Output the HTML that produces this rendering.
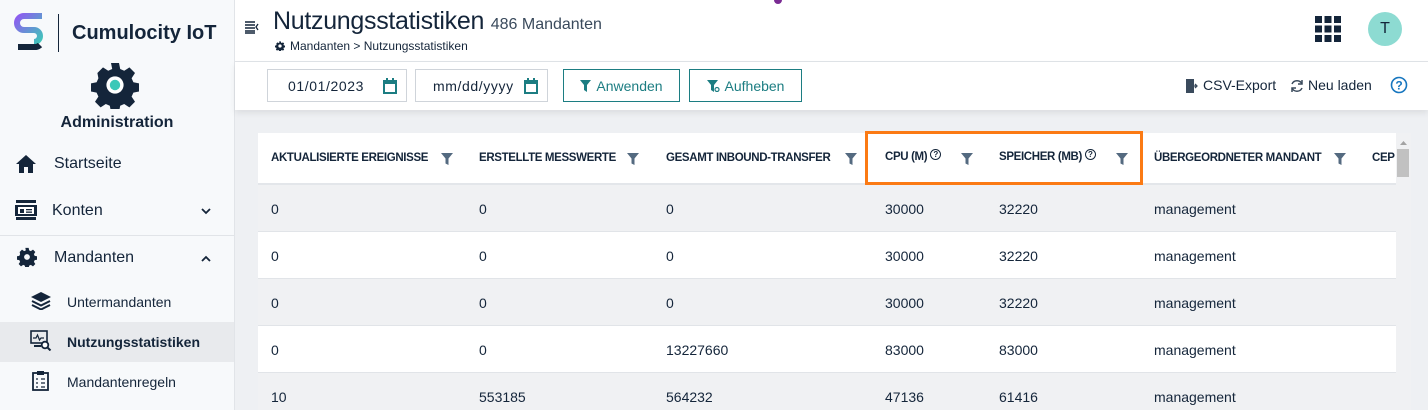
<!DOCTYPE html>
<html><head><meta charset="utf-8"><style>
*{box-sizing:border-box;margin:0;padding:0}
body{width:1428px;height:410px;overflow:hidden;font-family:"Liberation Sans",sans-serif;color:#14253a;background:#eef0f3;position:relative}
.sb{position:absolute;left:0;top:0;width:235px;height:410px;background:#f7f9fb;border-right:1px solid #e1e4e8}
.abs{position:absolute}
.nav{position:absolute;left:0;width:234px;font-size:16px;color:#14253a}
.top{position:absolute;left:235px;top:0;right:0;height:62px;background:#fff;border-bottom:1px solid #e1e4e8}
.tb{position:absolute;left:235px;top:62px;right:0;height:48px;background:#fff;box-shadow:0 3px 6px rgba(0,0,0,.08)}
.inp{position:absolute;top:7px;height:33px;border:1px solid #cfd4da;font-size:14px;background:#fff;letter-spacing:.6px}
.btn{position:absolute;top:7px;height:33px;border:1px solid #1c7d82;color:#1c7d82;font-size:14px;display:flex;align-items:center;justify-content:center;gap:5px}
.card{position:absolute;left:258px;top:133px;width:1138px;height:277px;background:#fff;overflow:hidden}
.hd{position:absolute;top:0;left:0;right:0;height:52px;border-bottom:2px solid #e3e6ea;font-size:11.5px;font-weight:bold;color:#14253a;letter-spacing:-.35px}
.hd span{position:absolute;top:19px;white-space:nowrap}
.q{display:inline-block;width:11px;height:11px;border:1.2px solid #14253a;border-radius:50%;font-size:8px;text-align:center;line-height:9px;vertical-align:3px;margin-left:3px;letter-spacing:0}
.row{position:absolute;left:0;right:0;height:47px;border-bottom:1px solid #e1e4e8;font-size:14px}
.row span{position:absolute;top:16px}
.g{background:#f0f1f3}
</style></head><body>
<div class="sb">
 <svg class="abs" style="left:14px;top:13px" width="32" height="40" viewBox="0 0 32 40"><defs><linearGradient id="lg" x1="0" y1="0" x2="1" y2="1"><stop offset="0" stop-color="#8e5cf0"/><stop offset="1" stop-color="#3cc8b8"/></linearGradient></defs><path d="M28 3H10a7 7 0 0 0 0 14h10a6 6 0 0 1 0 12" fill="none" stroke="url(#lg)" stroke-width="6"/><path d="M4 34h18a7 7 0 0 0 4-2" fill="none" stroke="#14253a" stroke-width="6"/></svg>
 <div class="abs" style="left:58px;top:14px;width:1px;height:38px;background:#14253a"></div>
 <div class="abs" style="left:72px;top:22px;font-size:20px;font-weight:bold">Cumulocity IoT</div>
 <svg class="abs" style="left:91px;top:61px" width="48" height="48" viewBox="0 0 24 24"><path fill="#14253a" d="M10 1h4l.6 3 2 .9 2.6-1.7 2.8 2.8-1.7 2.6.9 2 3 .6v4l-3 .6-.9 2 1.7 2.6-2.8 2.8-2.6-1.7-2 .9-.6 3h-4l-.6-3-2-.9-2.6 1.7-2.8-2.8 1.7-2.6-.9-2-3-.6v-4l3-.6.9-2L3.2 6 6 3.2l2.6 1.7 2-.9z"/><circle cx="12" cy="12" r="4.3" fill="#fff"/><circle cx="12" cy="12" r="2.6" fill="#3cc8b8"/></svg>
 <div class="abs" style="left:0;width:234px;top:114px;text-align:center;font-size:16px;font-weight:bold">Administration</div>
 <svg class="abs" style="left:16px;top:155px" width="20" height="18" viewBox="0 0 20 18"><path fill="#14253a" d="M10 0 0 9h3v9h5v-6h4v6h5V9h3z"/></svg>
 <div class="nav" style="top:155px;left:54px">Startseite</div>
 <svg class="abs" style="left:15px;top:200px" width="22" height="20" viewBox="0 0 22 20"><rect x="1" y="0" width="20" height="3" fill="#14253a"/><rect x="0" y="5" width="22" height="11" fill="#14253a"/><rect x="3" y="7" width="16" height="7" fill="#fff"/><rect x="5" y="9" width="4" height="4" fill="#14253a"/><rect x="11" y="9" width="6" height="1.3" fill="#14253a"/><rect x="11" y="11.5" width="6" height="1.3" fill="#14253a"/><rect x="1" y="17" width="20" height="3" fill="#14253a"/></svg>
 <div class="nav" style="top:202px;left:52px">Konten</div>
 <svg class="abs" style="left:201px;top:208px" width="10" height="7" viewBox="0 0 10 7"><path d="M1 1l4 4 4-4" fill="none" stroke="#14253a" stroke-width="1.8"/></svg>
 <div class="abs" style="left:0;top:235px;width:234px;height:1px;background:#e1e4e8"></div>
 <svg class="abs" style="left:17px;top:247px" width="20" height="20" viewBox="0 0 24 24"><path fill="#14253a" d="M10 1h4l.6 3 2 .9 2.6-1.7 2.8 2.8-1.7 2.6.9 2 3 .6v4l-3 .6-.9 2 1.7 2.6-2.8 2.8-2.6-1.7-2 .9-.6 3h-4l-.6-3-2-.9-2.6 1.7-2.8-2.8 1.7-2.6-.9-2-3-.6v-4l3-.6.9-2L3.2 6 6 3.2l2.6 1.7 2-.9z"/><circle cx="12" cy="12" r="3.5" fill="#f7f9fb"/></svg>
 <div class="nav" style="top:249px;left:54px">Mandanten</div>
 <svg class="abs" style="left:201px;top:255px" width="10" height="7" viewBox="0 0 10 7"><path d="M1 6l4-4 4 4" fill="none" stroke="#14253a" stroke-width="1.8"/></svg>
 <svg class="abs" style="left:31px;top:292px" width="20" height="18" viewBox="0 0 20 18"><path fill="#14253a" d="M10 0 20 5 10 10 0 5z"/><path fill="none" stroke="#14253a" stroke-width="2" d="M1 9l9 4.5L19 9M1 13l9 4.5 9-4.5"/></svg>
 <div class="nav" style="top:294px;left:67px;font-size:14px">Untermandanten</div>
 <div class="abs" style="left:0;top:322px;width:234px;height:40px;background:#e8eaed"></div>
 <svg class="abs" style="left:30px;top:330px" width="22" height="21" viewBox="0 0 22 21"><rect x="1" y="1" width="16" height="12" fill="none" stroke="#14253a" stroke-width="1.6"/><path d="M3 8h3l1.5-3 2 5 1.5-2h3" fill="none" stroke="#14253a" stroke-width="1.2"/><circle cx="15" cy="15" r="3.3" fill="#fff" stroke="#14253a" stroke-width="1.8"/><path d="M17.5 17.5l3 3" stroke="#14253a" stroke-width="2"/><rect x="4" y="15" width="7" height="2" fill="#14253a"/></svg>
 <div class="nav" style="top:334px;left:67px;font-size:14px;font-weight:bold">Nutzungsstatistiken</div>
 <svg class="abs" style="left:32px;top:370px" width="17" height="21" viewBox="0 0 17 21"><rect x="1" y="3" width="15" height="17" fill="none" stroke="#14253a" stroke-width="1.8"/><rect x="5" y="1" width="7" height="4" fill="#14253a"/><path d="M4 9h2M9 9h4M4 13h2M9 13h4M4 17h2M9 17h4" stroke="#14253a" stroke-width="1.2"/></svg>
 <div class="nav" style="top:374px;left:67px;font-size:14px">Mandantenregeln</div>
</div>
<div class="top">
 <svg class="abs" style="left:10px;top:21px" width="14" height="13" viewBox="0 0 14 13"><path d="M0 1h10M0 4h10M0 7h10M0 10h10M0 12h10" stroke="#14253a" stroke-width="1.4"/><path d="M13 3l-2 3 2 3" fill="none" stroke="#14253a" stroke-width="1.3"/></svg>
 <div class="abs" style="left:38px;top:7px;font-size:25px;color:#14253a;letter-spacing:-.3px">Nutzungsstatistiken <span style="font-size:16px;color:#3a4a5c;letter-spacing:0">486 Mandanten</span></div>
 <svg class="abs" style="left:40px;top:41px" width="10" height="10" viewBox="0 0 24 24"><path fill="#14253a" d="M10 1h4l.6 3 2 .9 2.6-1.7 2.8 2.8-1.7 2.6.9 2 3 .6v4l-3 .6-.9 2 1.7 2.6-2.8 2.8-2.6-1.7-2 .9-.6 3h-4l-.6-3-2-.9-2.6 1.7-2.8-2.8 1.7-2.6-.9-2-3-.6v-4l3-.6.9-2L3.2 6 6 3.2l2.6 1.7 2-.9z"/><circle cx="12" cy="12" r="4" fill="#fff"/></svg>
 <div class="abs" style="left:55px;top:39px;font-size:12px">Mandanten &gt; Nutzungsstatistiken</div>
 <svg class="abs" style="left:1080px;top:16px" width="26" height="26" viewBox="0 0 26 26"><g fill="#14253a"><rect x="0" y="0" width="7" height="7"/><rect x="9.5" y="0" width="7" height="7"/><rect x="19" y="0" width="7" height="7"/><rect x="0" y="9.5" width="7" height="7"/><rect x="9.5" y="9.5" width="7" height="7"/><rect x="19" y="9.5" width="7" height="7"/><rect x="0" y="19" width="7" height="7"/><rect x="9.5" y="19" width="7" height="7"/><rect x="19" y="19" width="7" height="7"/></g></svg>
 <div class="abs" style="left:1133px;top:12px;width:34px;height:34px;border-radius:50%;background:#8ddbd2;font-size:16px;text-align:center;line-height:34px">T</div>
</div>
<div class="tb">
 <div class="inp" style="left:32px;width:140px"><span class="abs" style="left:20px;top:8px">01/01/2023</span><svg class="abs" style="right:9px;top:8px" width="14" height="16" viewBox="0 0 14 16"><rect x="1" y="3" width="12" height="12" fill="none" stroke="#1c7d82" stroke-width="2"/><rect x="1" y="3" width="12" height="3" fill="#1c7d82"/><path d="M4 0v4M10 0v4" stroke="#1c7d82" stroke-width="2"/></svg></div>
 <div class="inp" style="left:180px;width:133px"><span class="abs" style="left:17px;top:8px">mm/dd/yyyy</span><svg class="abs" style="right:9px;top:8px" width="14" height="16" viewBox="0 0 14 16"><rect x="1" y="3" width="12" height="12" fill="none" stroke="#1c7d82" stroke-width="2"/><rect x="1" y="3" width="12" height="3" fill="#1c7d82"/><path d="M4 0v4M10 0v4" stroke="#1c7d82" stroke-width="2"/></svg></div>
 <div class="btn" style="left:328px;width:117px"><svg width="11" height="12" viewBox="0 0 11 12"><path fill="#1c7d82" d="M0 0h11L7 5v7L4 10V5z"/></svg>Anwenden</div>
 <div class="btn" style="left:454px;width:113px"><svg width="13" height="12" viewBox="0 0 13 12"><path fill="#1c7d82" d="M0 0h11L7 5v7L4 10V5z"/><circle cx="10" cy="9.5" r="2" fill="#fff" stroke="#1c7d82" stroke-width="1.2"/></svg>Aufheben</div>
 <svg class="abs" style="left:951px;top:17px" width="12" height="14" viewBox="0 0 12 14"><rect x="0" y="0" width="8" height="14" fill="#3a4a5c"/><path d="M6 7h5M9 5l2 2-2 2" stroke="#3a4a5c" stroke-width="1.3" fill="none"/></svg>
 <div class="abs" style="left:968px;top:15px;font-size:14px">CSV-Export</div>
 <svg class="abs" style="left:1055px;top:17px" width="14" height="14" viewBox="0 0 14 14"><path d="M12 5A5.5 5.5 0 0 0 2 5M2 9a5.5 5.5 0 0 0 10 0" fill="none" stroke="#3a4a5c" stroke-width="1.5"/><path d="M12 1v4H8M2 13V9h4" fill="none" stroke="#3a4a5c" stroke-width="1.5"/></svg>
 <div class="abs" style="left:1073px;top:15px;font-size:14px">Neu laden</div>
 <svg class="abs" style="left:1155px;top:14px" width="18" height="18" viewBox="0 0 18 18"><circle cx="9" cy="9" r="7.5" fill="none" stroke="#1776bf" stroke-width="1.6"/><text x="9" y="13.5" font-size="12" font-weight="bold" text-anchor="middle" fill="#1776bf" font-family="Liberation Sans">?</text></svg>
</div>
<div class="card">
 <div class="hd">
  <span style="left:13px">AKTUALISIERTE EREIGNISSE</span>
  <span style="left:221px">ERSTELLTE MESSWERTE</span>
  <span style="left:408px">GESAMT INBOUND-TRANSFER</span>
  <span style="left:627px;top:16px">CPU (M)<span class="q" style="position:static">?</span></span>
  <span style="left:741px;top:16px">SPEICHER (MB)<span class="q" style="position:static">?</span></span>
  <span style="left:896px">ÜBERGEORDNETER MANDANT</span>
  <span style="left:1114px">CEP</span>
 </div>
 <div class="row g" style="top:52px"><span style="left:13px">0</span><span style="left:221px">0</span><span style="left:408px">0</span><span style="left:627px">30000</span><span style="left:741px">32220</span><span style="left:896px">management</span></div>
 <div class="row" style="top:99px"><span style="left:13px">0</span><span style="left:221px">0</span><span style="left:408px">0</span><span style="left:627px">30000</span><span style="left:741px">32220</span><span style="left:896px">management</span></div>
 <div class="row g" style="top:146px"><span style="left:13px">0</span><span style="left:221px">0</span><span style="left:408px">0</span><span style="left:627px">30000</span><span style="left:741px">32220</span><span style="left:896px">management</span></div>
 <div class="row" style="top:193px"><span style="left:13px">0</span><span style="left:221px">0</span><span style="left:408px">13227660</span><span style="left:627px">83000</span><span style="left:741px">83000</span><span style="left:896px">management</span></div>
 <div class="row g" style="top:240px"><span style="left:13px">10</span><span style="left:221px">553185</span><span style="left:408px">564232</span><span style="left:627px">47136</span><span style="left:741px">61416</span><span style="left:896px">management</span></div>
</div>
<svg class="abs" style="left:0;top:0" width="1428" height="410">
 <g fill="#546a80">
  <path d="M441 153h12l-4.5 5.5V165l-3-1.5v-5z"/><path d="M627 153h12l-4.5 5.5V165l-3-1.5v-5z"/><path d="M845 153h12l-4.5 5.5V165l-3-1.5v-5z"/><path d="M961 153h12l-4.5 5.5V165l-3-1.5v-5z"/><path d="M1116 153h12l-4.5 5.5V165l-3-1.5v-5z"/><path d="M1334 153h12l-4.5 5.5V165l-3-1.5v-5z"/>
 </g>
 <rect x="866.5" y="132.5" width="275" height="51" fill="none" stroke="#fb7a14" stroke-width="3"/>
 <rect x="1396" y="133" width="15" height="277" fill="#f0f1f3"/>
 <rect x="1397" y="149" width="12" height="28" fill="#c1c1c1"/>
 <path d="M1400 145l3.5-4 3.5 4z" fill="#a3a3a3"/>
 <circle cx="778" cy="0" r="4" fill="#7a2b93"/>
</svg>
</body></html>
